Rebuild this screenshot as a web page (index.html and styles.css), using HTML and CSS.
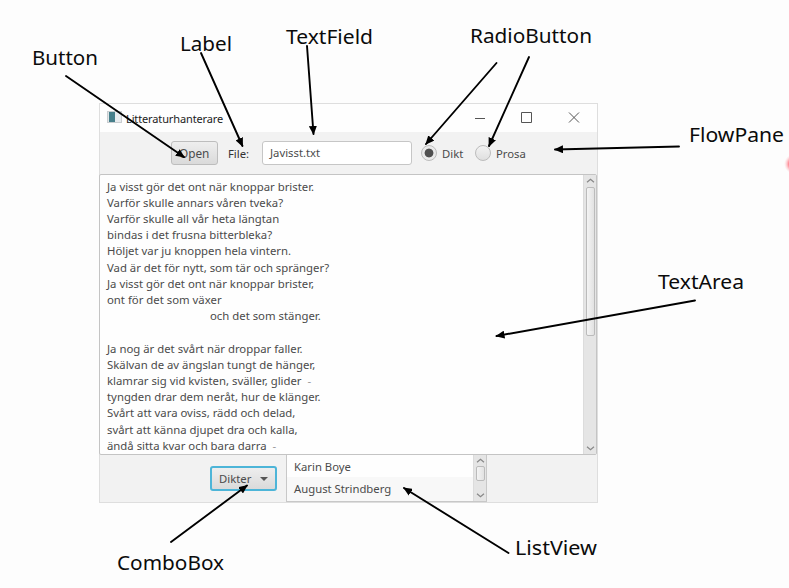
FILE: index.html
```html
<!DOCTYPE html>
<html lang="sv">
<head>
<meta charset="utf-8">
<title>Litteraturhanterare</title>
<link rel="stylesheet" href="styles.css">
</head>
<body>
<main class="slide">
  <section class="window">
    <header class="titlebar">
      <span class="app-icon"></span>
      <span class="title">Litteraturhanterare</span>
      <svg class="controls" width="108" height="14" viewBox="0 0 108 14"><path d="M1 7.5h10M47.5 1.500h10v10h-10zM95 1.500l10 10M105 1.500l-10 10"/></svg>
    </header>
    <div class="toolbar">
      <span class="button open">Open</span>
      <span class="file-label">File:</span>
      <span class="textfield">Javisst.txt</span>
      <span class="radio selected"></span><span class="radio-label dikt">Dikt</span>
      <span class="radio"></span><span class="radio-label">Prosa</span>
    </div>
    <div class="textarea">
      <div class="poem">
        <p>Ja visst gör det ont när knoppar brister.</p>
        <p>Varför skulle annars våren tveka?</p>
        <p>Varför skulle all vår heta längtan</p>
        <p>bindas i det frusna bitterbleka?</p>
        <p>Höljet var ju knoppen hela vintern.</p>
        <p>Vad är det för nytt, som tär och spränger?</p>
        <p>Ja visst gör det ont när knoppar brister,</p>
        <p>ont för det som växer</p>
        <p class="indent">och det som stänger.</p>
        <p>&nbsp;</p>
        <p>Ja nog är det svårt när droppar faller.</p>
        <p>Skälvan de av ängslan tungt de hänger,</p>
        <p>klamrar sig vid kvisten, sväller, glider <span class="dash">-</span></p>
        <p>tyngden drar dem neråt, hur de klänger.</p>
        <p>Svårt att vara oviss, rädd och delad,</p>
        <p>svårt att känna djupet dra och kalla,</p>
        <p>ändå sitta kvar och bara darra <span class="dash">-</span></p>
      </div>
      <div class="scrollbar">
        <svg width="9" height="5" viewBox="0 0 9 5"><path d="M1 4.300l3.500-3 3.500 3"/></svg>
        <span class="thumb"></span>
        <svg class="down" width="9" height="5" viewBox="0 0 9 5"><path d="M1 .7l3.500 3 3.500-3"/></svg>
      </div>
    </div>
    <footer class="bottom">
      <span class="button combo">Dikter<span class="caret"></span></span>
      <div class="list">
        <ul>
          <li>Karin Boye</li>
          <li>August Strindberg</li>
        </ul>
        <div class="scrollbar small">
          <svg width="9" height="5" viewBox="0 0 9 5"><path d="M1 4.300l3.500-3 3.500 3"/></svg>
          <span class="thumb"></span>
          <svg class="down" width="9" height="5" viewBox="0 0 9 5"><path d="M1 .7l3.500 3 3.500-3"/></svg>
        </div>
      </div>
    </footer>
  </section>
  <svg class="annotations" width="789" height="588" viewBox="0 0 789 588">
    <defs>
      <marker id="head" markerUnits="userSpaceOnUse" markerWidth="10" markerHeight="8" refX="8" refY="4" orient="auto"><path d="M0 0L9 4L0 8z"/></marker>
      <radialGradient id="glow"><stop offset="0" stop-color="#ff3b50"/><stop offset=".5" stop-color="#ff7c88"/><stop offset="1" stop-color="#ffd0d4" stop-opacity="0"/></radialGradient>
    </defs>
    <g class="arrows">
      <path d="M66 76L184 157"/>
      <path d="M201 53L242.500 146"/>
      <path d="M307 46L313.500 134"/>
      <path d="M496.500 63L426 144"/>
      <path d="M529 57L489 146"/>
      <path d="M679 146.500L555 149.500"/>
      <path d="M695 300.500L496.500 336"/>
      <path d="M171 542L247 485.500"/>
      <path d="M508.500 553L404 488"/>
    </g>
    <g class="names">
      <text x="32" y="64.500" textLength="66" lengthAdjust="spacingAndGlyphs">Button</text>
      <text x="180" y="51" textLength="52" lengthAdjust="spacingAndGlyphs">Label</text>
      <text x="286" y="43.500" textLength="87" lengthAdjust="spacingAndGlyphs">TextField</text>
      <text x="470" y="43" textLength="122" lengthAdjust="spacingAndGlyphs">RadioButton</text>
      <text x="689" y="142" textLength="95" lengthAdjust="spacingAndGlyphs">FlowPane</text>
      <text x="658" y="289" textLength="86" lengthAdjust="spacingAndGlyphs">TextArea</text>
      <text x="117" y="569.500" textLength="107" lengthAdjust="spacingAndGlyphs">ComboBox</text>
      <text x="515" y="554.500" textLength="82" lengthAdjust="spacingAndGlyphs">ListView</text>
    </g>
    <circle cx="794" cy="164" r="10" fill="url(#glow)"/>
  </svg>
</main>
</body>
</html>
```
FILE: styles.css
```css
* { box-sizing: border-box; }
body { margin: 0; background: #fdfdfd; font: 11.3px "Noto Sans", sans-serif; color: #4b4b4b; }
.slide { position: relative; width: 789px; height: 588px; padding: 103px 0 0 99px; overflow: hidden; }
.window { width: 499px; height: 400px; border: 1px solid #dedede; background: #f2f2f2; display: flex; flex-direction: column; }
.titlebar { height: 28px; flex: none; background: #fefefe; display: flex; align-items: center; padding-left: 7px; }
.app-icon { width: 15px; height: 12px; margin-top: -2px; border: 1px solid #c9cdd0; background: linear-gradient(90deg, #dfe6e8 0 1px, #477f8b 1px 7px, #e8ebee 7px); }
.title { margin-left: 4px; color: #222; font-size: 11px; width: 98px; white-space: nowrap; letter-spacing: -.13px; }
.controls { margin-left: 250px; fill: none; stroke: #555; stroke-width: 1; }
.toolbar { height: 42px; flex: none; display: flex; align-items: center; padding-left: 71px; }
.button { display: flex; align-items: center; border: 1px solid #bdbdbd; border-radius: 3px; background: linear-gradient(#eee, #dadada); }
.open { width: 47px; height: 24px; padding-left: 7px; font-size: 11.8px; }
.file-label { width: 34px; margin-left: 10px; padding-top: 1px; font-size: 11.3px; color: #333; }
.textfield { width: 150px; height: 24px; line-height: 22px; border: 1px solid #c6c6c6; border-radius: 3px; background: #fff; padding-left: 7px; }
.radio { width: 16px; height: 16px; border: 1px solid #bcbcbc; border-radius: 50%; background: linear-gradient(#f3f3f3, #dfdfdf); }
.radio.selected { margin-left: 9px; background: radial-gradient(circle, #505050 0 4px, #eaeaea 4.800px); }
.radio-label { margin-left: 5px; }
.dikt { width: 33px; }
.textarea { height: 281px; flex: none; margin-left: -1px; display: flex; justify-content: space-between; border: 1px solid #c4c4c4; border-radius: 2px; background: #fefefe; }
.poem { padding: 3.500px 0 0 7px; line-height: 16.200px; font-size: 11.35px; white-space: nowrap; }
.poem p { margin: 0; }
.poem .indent { padding-left: 103px; }
.dash { color: #999; margin-left: 3px; }
.scrollbar { width: 13px; background: #e5e5e5; display: flex; flex-direction: column; align-items: center; padding: 3px 0; border-left: 1px solid #dcdcdc; }
.scrollbar svg { fill: none; stroke: #888; stroke-width: 1.2; flex: none; }
.thumb { width: 9px; height: 149px; margin-top: 4px; border: 1px solid #bbb; border-radius: 2px; background: linear-gradient(90deg, #f4f4f4, #e2e2e2); }
.scrollbar .down { margin-top: auto; }
.bottom { flex: 1; display: flex; padding-left: 110px; }
.combo { width: 67px; height: 25px; margin-top: 11px; padding-left: 7px; border: 2px solid #4db5d8; border-radius: 3px; }
.caret { margin-left: 9px; border: 4px solid transparent; border-top-color: #555; border-bottom: 0; }
.list { width: 201px; height: 47px; margin-left: 9px; border: 1px solid #c8c8c8; border-top: 0; display: flex; background: #fefefe; }
.list ul { margin: 0; padding: 0; list-style: none; flex: 1; }
.list li { height: 22px; line-height: 23px; padding-left: 7px; }
.list li + li { height: 24px; line-height: 23px; background: #f8f8f8; }
.small .thumb { height: 15px; margin-top: 3px; }
.annotations { position: absolute; left: 0; top: 0; }
.arrows { fill: none; stroke: #000; stroke-width: 1.900; }
.arrows path { marker-end: url(#head); }
.arrows path, #head path { stroke-linecap: round; }
#head path { stroke: none; fill: #000; }
.names { font: 20.500px "Noto Sans", sans-serif; fill: #0b0b0b; }
```
